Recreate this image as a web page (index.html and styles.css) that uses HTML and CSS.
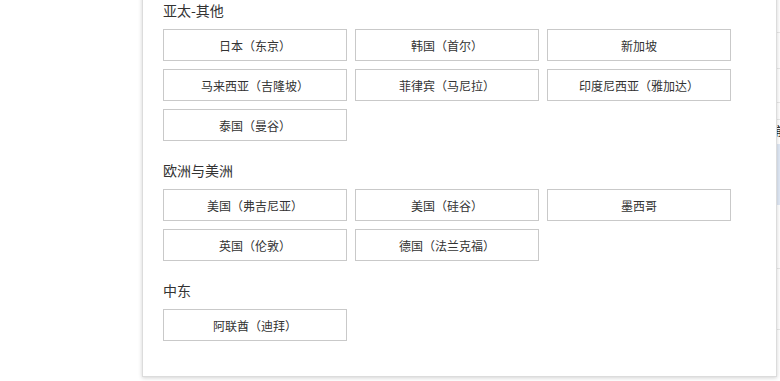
FILE: index.html
```html
<!doctype html>
<html lang="zh-CN">
  <head>
    <meta charset="UTF-8" />
    <meta name="viewport" content="width=device-width, initial-scale=1.0" />
    <title>选择地域</title>
    <link rel="stylesheet" href="styles.css">
  </head>
  <body>
    <!-- page behind the popup -->
    <div class="page">
      <div class="list">
        <div class="row" style="height: 33px"></div>
        <div class="row" style="height: 36px"></div>
        <div class="row" style="height: 34px"></div>
        <div class="row" style="height: 17px"></div>
        <div class="row head">前</div>
        <div class="row active"></div>
        <div class="row" style="height: 64px"></div>
        <div class="row" style="height: 61px"></div>
      </div>
    </div>

    <!-- region picker -->
    <div class="region-popup">
      <div class="region-group">
        <h3>亚太-其他</h3>
        <div class="region-grid">
          <div class="region-btn">日本（东京）</div>
          <div class="region-btn">韩国（首尔）</div>
          <div class="region-btn">新加坡</div>
          <div class="region-btn">马来西亚（吉隆坡）</div>
          <div class="region-btn">菲律宾（马尼拉）</div>
          <div class="region-btn">印度尼西亚（雅加达）</div>
          <div class="region-btn">泰国（曼谷）</div>
        </div>
      </div>

      <div class="region-group">
        <h3>欧洲与美洲</h3>
        <div class="region-grid">
          <div class="region-btn">美国（弗吉尼亚）</div>
          <div class="region-btn">美国（硅谷）</div>
          <div class="region-btn">墨西哥</div>
          <div class="region-btn">英国（伦敦）</div>
          <div class="region-btn">德国（法兰克福）</div>
        </div>
      </div>

      <div class="region-group">
        <h3>中东</h3>
        <div class="region-grid">
          <div class="region-btn">阿联酋（迪拜）</div>
        </div>
      </div>
    </div>
  </body>
</html>
```

FILE: styles.css
```css
:root {
  --text-color: #333;
  --border-color: #c9c9c9;
  --line-color: #e8e8e8;
}

body {
  margin: 0;
  font-family: "Noto Sans CJK SC", "Liberation Sans", sans-serif;
  color: var(--text-color);
  background: #fff;
  height: 381px;
  overflow: hidden;
}

/* Page content behind the popup */
.page {
  display: flex;
  justify-content: flex-end;
  height: 381px;
}

.list {
  width: 200px;
}

.row {
  border-bottom: 1px solid var(--line-color);
  box-sizing: border-box;
}

.row.head {
  height: 24px;
  padding-left: 195px;
  font-size: 12px;
  line-height: 22px;
  color: #222;
  border-bottom: none;
}

.row.active {
  height: 61px;
  background: #dfe8f5;
  border-bottom: none;
}

/* Region picker popup */
.region-popup {
  position: absolute;
  left: 142px;
  top: -10px;
  width: 635px;
  box-sizing: border-box;
  padding: 9px 20px 16px;
  background: #fff;
  border: 1px solid #dcdcdc;
  box-shadow: 0 1px 4px rgba(0, 0, 0, 0.18);
}

.region-group {
  padding-bottom: 19px;
}

.region-group h3 {
  margin: 0 0 9px;
  font-size: 14px;
  font-weight: normal;
  line-height: 20px;
  color: var(--text-color);
}

.region-grid {
  display: grid;
  grid-template-columns: repeat(3, 184px);
  grid-auto-rows: 32px;
  gap: 8px;
}

.region-btn {
  display: flex;
  align-items: center;
  justify-content: center;
  border: 1px solid var(--border-color);
  background: #fff;
  font-size: 12px;
  color: var(--text-color);
  cursor: pointer;
}

.region-btn:hover {
  border-color: #0070cc;
  color: #0070cc;
}
```
